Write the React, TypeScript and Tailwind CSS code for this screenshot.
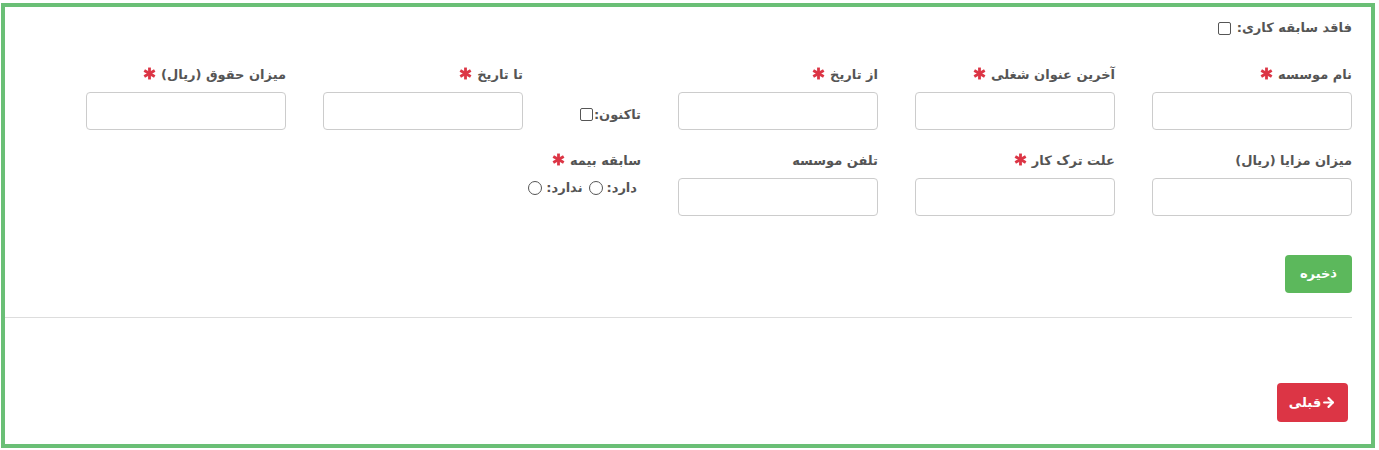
import { ArrowRight } from "lucide-react";

const font = { fontFamily: '"DejaVu Sans", "Noto Sans", sans-serif' };

const Star = () => (
  <svg className="inline-block w-[13px] h-[13px] mr-[5px] align-[-1px]" viewBox="0 0 12 12" stroke="#dc3545" strokeWidth={2.6} strokeLinecap="butt">
    <line x1="6" y1="0.5" x2="6" y2="11.5" />
    <line x1="1.2" y1="3.2" x2="10.8" y2="8.8" />
    <line x1="1.2" y1="8.8" x2="10.8" y2="3.2" />
  </svg>
);

const Field = ({ label, req }: { label: string; req?: boolean }) => (
  <div className="w-[200px] shrink-0">
    <div className="h-[20px] mb-[7px] text-[13px] font-bold text-[#555] leading-[20px] whitespace-nowrap">
      {label}
      {req && <Star />}
    </div>
    <input className="block w-[200px] h-[38px] rounded-[4px] border border-[#ccc] bg-white" />
  </div>
);

const Box = ({ round }: { round?: boolean }) => (
  <span className={`inline-block w-[13px] h-[13px] border border-[#555] bg-white ${round ? "rounded-full w-[14px] h-[14px]" : "rounded-[2px]"}`} />
);

export default function App() {
  return (
    <div className="bg-white w-[1379px] h-[450px] pt-[3px] pl-[1px]" style={font}>
      <div dir="rtl" className="w-[1374px] h-[445px] border-4 border-[#6abf76] pr-[19px]">
        <div className="pt-[11px] h-[58px] flex items-start gap-[6px] text-[13px] font-bold text-[#555] leading-[20px]">
          <span>فاقد سابقه کاری:</span>
          <span className="mt-[3px]"><Box /></span>
        </div>

        <div className="flex gap-[37px]">
          <Field label="نام موسسه" req />
          <Field label="آخرین عنوان شغلی" req />
          <Field label="از تاریخ" req />
          <div className="w-[81px] shrink-0 pt-[34px] flex items-center gap-[1px] text-[13px] font-bold text-[#555] leading-[20px]">
            <span>تاکنون:</span>
            <Box />
          </div>
          <Field label="تا تاریخ" req />
          <Field label="میزان حقوق (ریال)" req />
        </div>

        <div className="flex gap-[37px] mt-[21px]">
          <Field label="میزان مزایا (ریال)" />
          <Field label="علت ترک کار" req />
          <Field label="تلفن موسسه" />
          <div className="w-[200px] shrink-0">
            <div className="h-[20px] mb-[7px] text-[13px] font-bold text-[#555] leading-[20px] whitespace-nowrap">
              سابقه بیمه
              <Star />
            </div>
            <div className="flex items-center gap-[4px] text-[13px] font-bold text-[#555] leading-[20px] pr-[4px]">
              <span>دارد:</span>
              <Box round />
              <span className="mr-[2px]">ندارد:</span>
              <Box round />
            </div>
          </div>
        </div>

        <div className="mt-[39px]">
          <button className="w-[67px] h-[38px] rounded-[4px] bg-[#5cb85c] text-white text-[13px] font-bold" style={font}>
            ذخیره
          </button>
        </div>

        <div className="mt-[24px] border-t border-[#ddd] -ml-0" />

        <div className="mt-[65px] pr-0 flex">
          <button className="mr-[4px] w-[71px] h-[39px] rounded-[4px] bg-[#dc3545] text-white text-[13px] font-bold flex items-center justify-center" style={font}>
            <ArrowRight size={15} strokeWidth={3.5} />
            <span>قبلی</span>
          </button>
        </div>
      </div>
    </div>
  );
}
